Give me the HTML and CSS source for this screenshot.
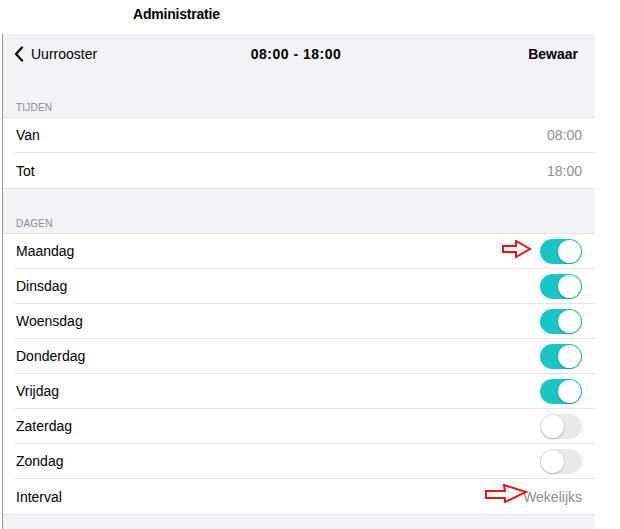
FILE: index.html
```html
<!DOCTYPE html>
<html>
<head>
<meta charset="utf-8">
<link rel="stylesheet" href="styles.css">
</head>
<body>
<div class="topbar"><span class="apptitle">Administratie</span></div>
<div class="main">
  <div class="panel">
    <div class="nav">
      <div class="back">
        <svg class="chev" width="10" height="16" viewBox="0 0 10 16"><path d="M8 1.5 L2 8 L8 14.5" fill="none" stroke="#000" stroke-width="2.2" stroke-linecap="round" stroke-linejoin="round"/></svg>
        <span>Uurrooster</span>
      </div>
      <div class="navtitle">08:00 - 18:00</div>
      <div class="save">Bewaar</div>
    </div>
    <div class="sechead first">TIJDEN</div>
    <div class="group">
      <div class="row"><span>Van</span><span class="val">08:00</span></div>
      <div class="row last"><span>Tot</span><span class="val">18:00</span></div>
    </div>
    <div class="sechead">DAGEN</div>
    <div class="group">
      <div class="row"><span>Maandag</span>
        <svg class="arrow a1" width="30" height="18" viewBox="0 0 30 18"><polygon points="1,6 14,6 14,1 28,9 14,17 14,12 1,12" fill="none" stroke="#e8141c" stroke-width="2"/></svg>
        <span class="toggle on"></span></div>
      <div class="row"><span>Dinsdag</span><span class="toggle on"></span></div>
      <div class="row"><span>Woensdag</span><span class="toggle on"></span></div>
      <div class="row"><span>Donderdag</span><span class="toggle on"></span></div>
      <div class="row"><span>Vrijdag</span><span class="toggle on"></span></div>
      <div class="row"><span>Zaterdag</span><span class="toggle"></span></div>
      <div class="row"><span>Zondag</span><span class="toggle"></span></div>
      <div class="row last"><span>Interval</span>
        <svg class="arrow a2" width="44" height="20" viewBox="0 0 44 20"><polygon points="1,7 20,7 19,1 41,8 20,18 20,14 1,14" fill="none" stroke="#e8141c" stroke-width="2"/></svg>
        <span class="val">Wekelijks</span></div>
    </div>
  </div>
</div>
</body>
</html>
```
FILE: styles.css
```css
html, body {
  margin: 0;
  padding: 0;
  background: #ffffff;
  font-family: "Liberation Sans", Arial, sans-serif;
  color: #000;
}
.topbar {
  height: 34px;
  position: relative;
}
.apptitle {
  display: block;
  padding-left: 133px;
  padding-top: 6px;
  font-size: 14px;
  font-weight: bold;
  line-height: 16px;
  letter-spacing: -0.2px;
}
.main {
  display: flex;
  height: 495px;
  padding-left: 2px;
}
.panel {
  width: 592px;
  border-left: 1px solid #9a9a9a;
  background: #f2f2f7;
  display: flex;
  flex-direction: column;
}
.nav {
  height: 40px;
  display: grid;
  grid-template-columns: 1fr auto 1fr;
  align-items: center;
  padding: 0 17px 0 11px;
  font-size: 14px;
}
.back {
  display: flex;
  align-items: center;
  gap: 7px;
}
.chev { display: block; }
.navtitle {
  font-weight: bold;
  text-align: center;
  letter-spacing: 0.5px;
}
.save {
  font-weight: bold;
  text-align: right;
}
.sechead {
  height: 45px;
  box-sizing: border-box;
  display: flex;
  align-items: flex-end;
  padding: 0 0 4px 13px;
  font-size: 10px;
  color: #8a8a8e;
  letter-spacing: 0.2px;
  border-bottom: 1px solid #e2e2e6;
}
.sechead.first {
  height: 44px;
}
.group {
  background: #ffffff;
  border-bottom: 1px solid #e2e2e6;
}
.row {
  position: relative;
  height: 35px;
  box-sizing: border-box;
  margin-left: 12px;
  padding-right: 13px;
  border-bottom: 1px solid #e4e4e8;
  display: flex;
  align-items: center;
  justify-content: space-between;
  font-size: 14px;
  padding-left: 1px;
}
.row.last {
  border-bottom: none;
}
.val {
  color: #8e8e93;
}
.toggle {
  width: 42px;
  height: 25px;
  border-radius: 13px;
  background: #e9e9eb;
  position: relative;
  box-sizing: border-box;
}
.toggle::after {
  content: "";
  position: absolute;
  top: 1px;
  left: 1px;
  width: 23px;
  height: 23px;
  border-radius: 50%;
  background: #fff;
  box-shadow: 0 1px 2px rgba(0,0,0,0.25), 0 0 0 0.5px rgba(0,0,0,0.06);
}
.toggle.on {
  background: #19c6c4;
}
.toggle.on::after {
  left: 18px;
}
.arrow {
  position: absolute;
}
.arrow.a1 {
  left: 487px;
  top: 6px;
}
.arrow.a2 {
  left: 470px;
  top: 5px;
}
```
